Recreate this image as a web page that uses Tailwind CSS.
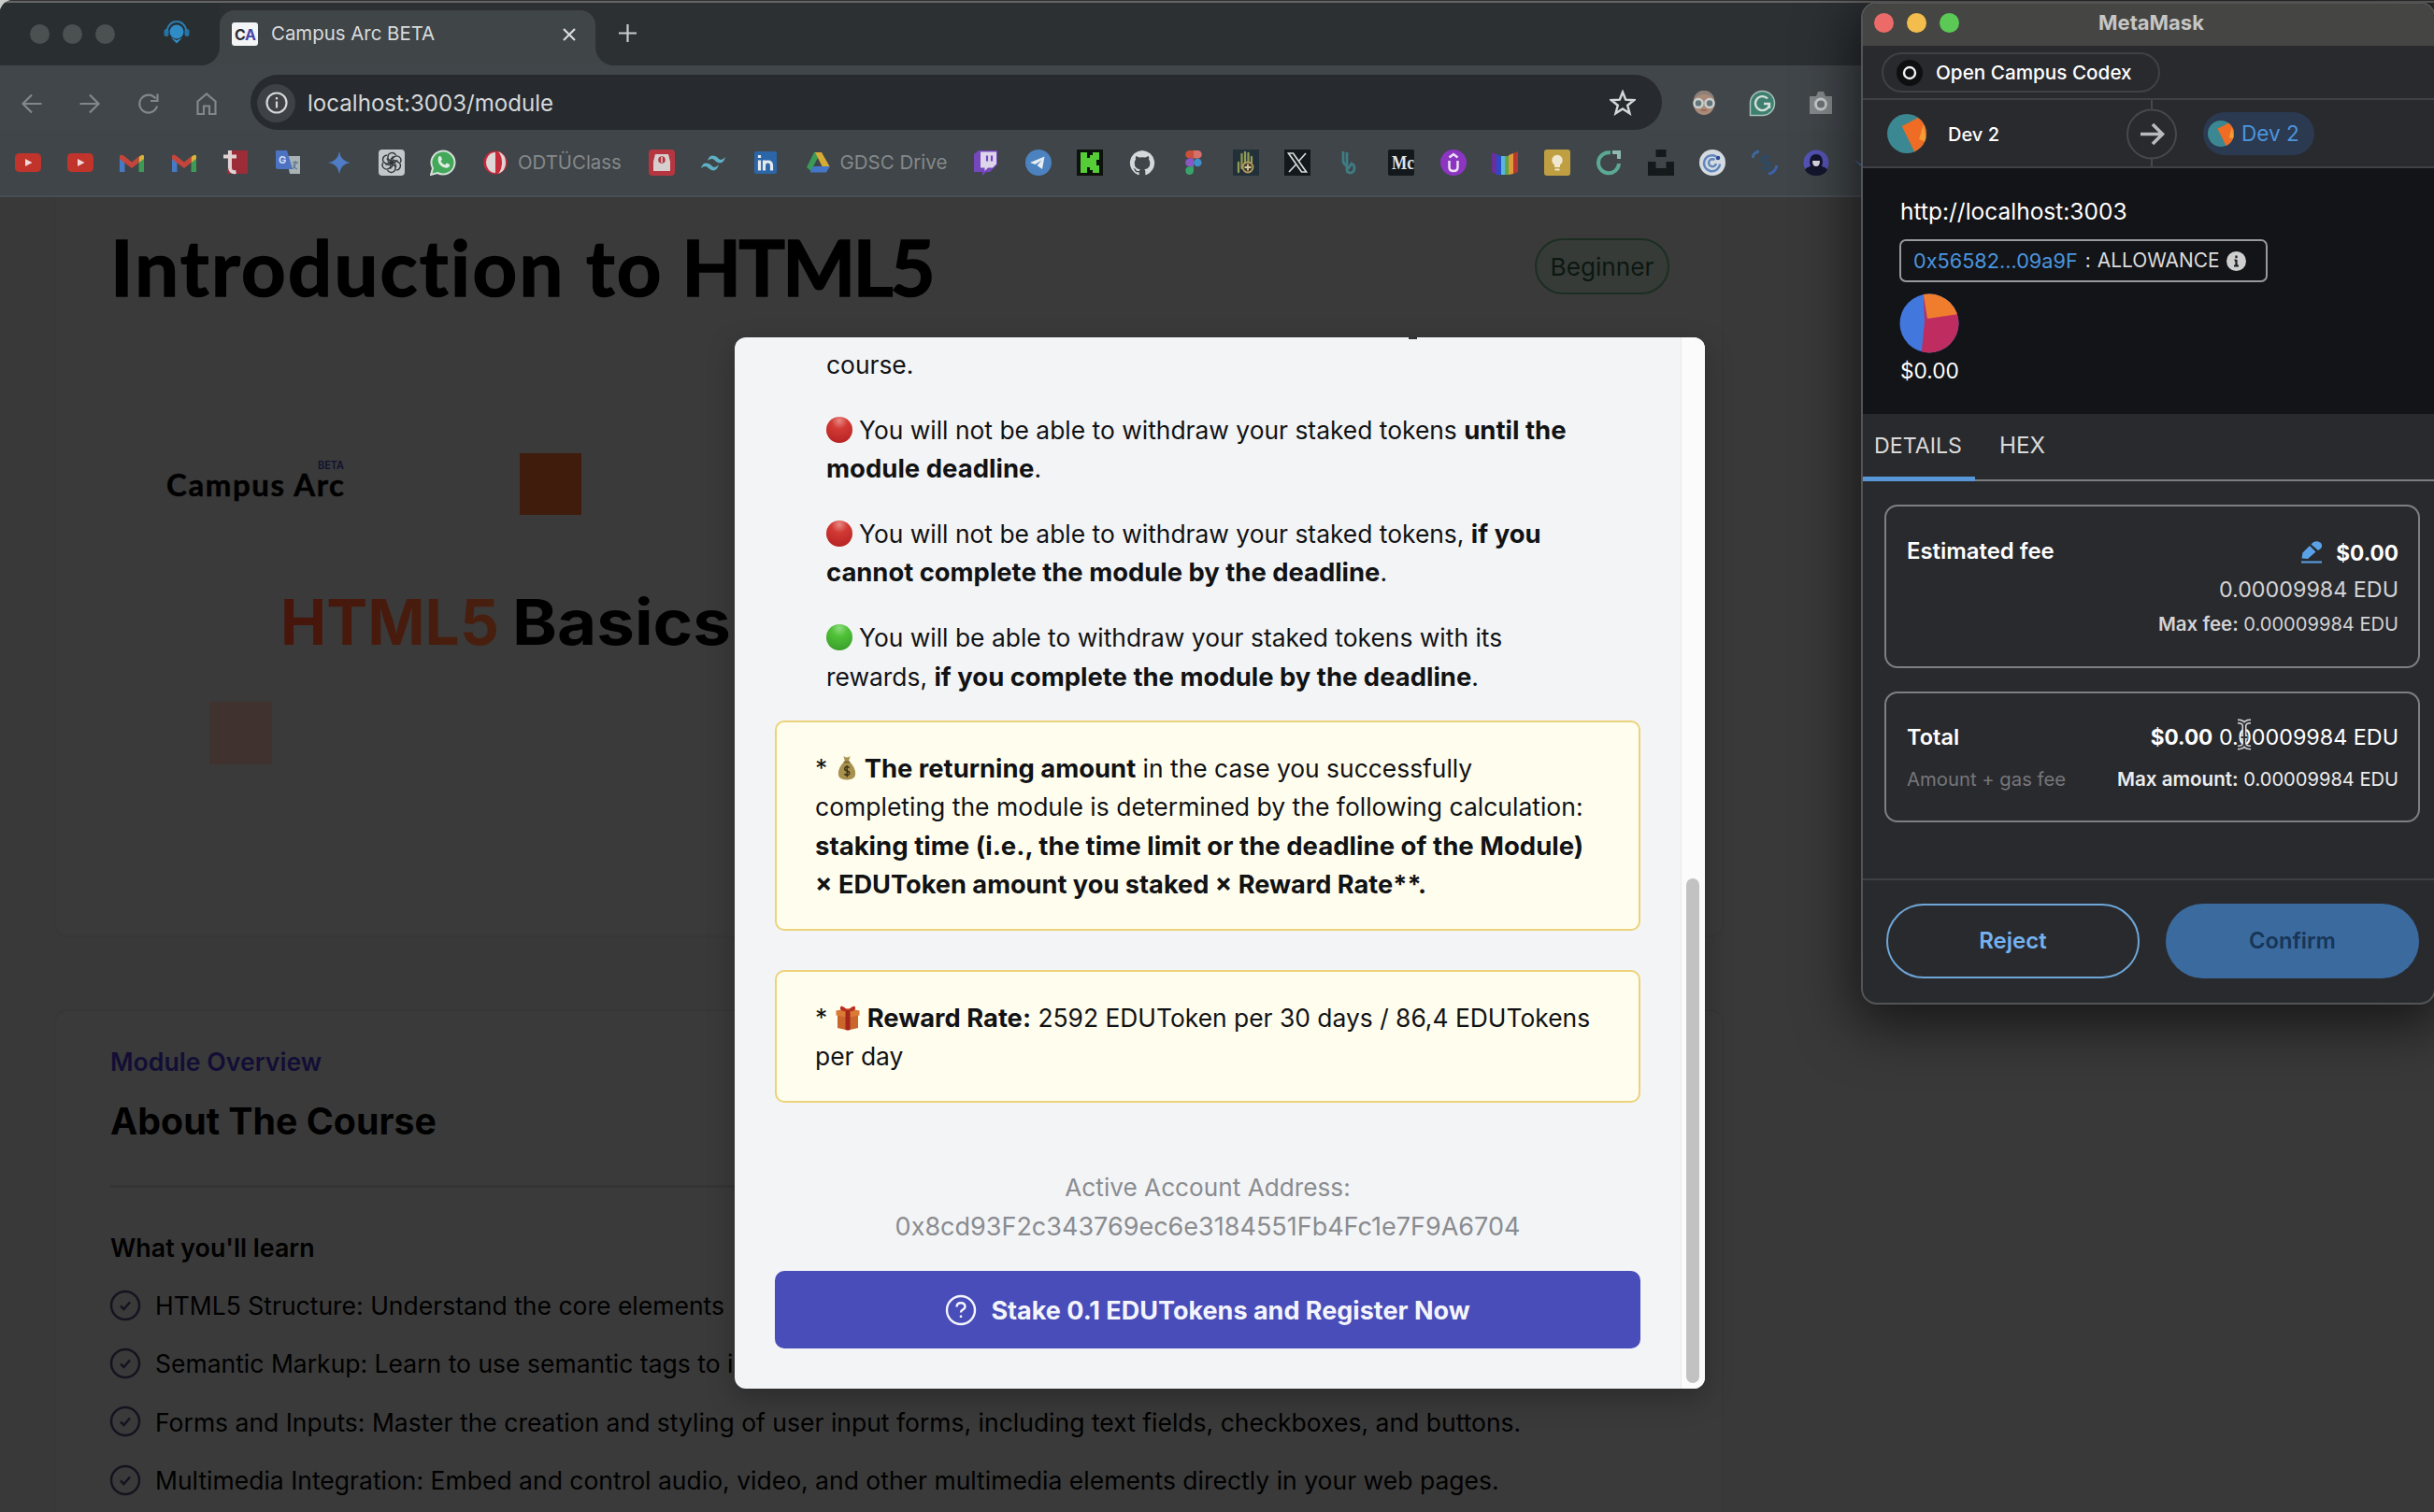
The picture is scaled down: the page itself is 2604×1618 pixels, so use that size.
<!DOCTYPE html>
<html lang="en">
<head>
<meta charset="utf-8">
<title>Campus Arc BETA</title>
<script src="https://cdn.jsdelivr.net/npm/@tailwindcss/browser@4"></script>
</head>
<body class="bg-[#333333]">
<div class="relative h-[1618px] w-[2604px] overflow-hidden bg-[#333333] font-['Inter',sans-serif] whitespace-nowrap">
  <div class="absolute left-0 top-0 size-3 bg-[#c9cbc8]"></div>

  <!-- Browser window -->
  <div class="relative flex h-full flex-col overflow-hidden rounded-tl-[14px] bg-[#3a3a3a]">
    <div class="h-[1px] shrink-0 bg-[#333333]"></div>
    <div class="h-[2px] shrink-0 bg-[#646464]"></div>

    <!-- Tab strip -->
    <div class="flex h-[67px] shrink-0 bg-[#404548]">
      <div class="flex w-[235px] items-center rounded-br-[20px] bg-[#292e30] pl-[32px]">
        <div class="mt-[-1px] flex gap-[14px]">
          <div class="size-[21px] rounded-full bg-[#4b5050]"></div>
          <div class="size-[21px] rounded-full bg-[#4b5050]"></div>
          <div class="size-[21px] rounded-full bg-[#4b5050]"></div>
        </div>
        <svg class="ml-[52px] mt-[-2px] size-[28px]" viewBox="0 0 28 28"><rect x="0.5" y="9" width="5" height="8" rx="2.5" fill="#2573a6"/><rect x="22.500" y="9" width="5" height="8" rx="2.5" fill="#2573a6"/><path d="M4 11a10 10 0 0 1 20 0" fill="none" stroke="#2b7cb0" stroke-width="2"/><circle cx="14" cy="12" r="7.500" fill="#2f8cc4"/><path d="M8 18.500l6 2.500 6-2.500-6 6z" fill="#2f8cc4"/></svg>
      </div>
      <div class="w-[402px] bg-[#2c3032]">
        <div class="mt-[8px] flex h-[59px] items-center rounded-t-[16px] bg-[#404548] pl-[13px] pb-[9px]">
          <svg class="h-[25px] w-[28px]" viewBox="0 0 28 25"><rect width="28" height="25" rx="3" fill="#f4f5f7"/><text x="3" y="18.500" font-family="Inter" font-weight="700" font-size="16" fill="#2b2b33">C</text><text x="14" y="18.500" font-family="Inter" font-weight="700" font-size="16" fill="#4a45a8">A</text></svg>
          <div class="ml-[14px] text-[20.4px] text-[#d9dbdc]">Campus Arc BETA</div>
          <svg class="ml-[136px] mt-px size-[16px]" viewBox="0 0 16 16"><path d="M2 2l12 12M14 2L2 14" stroke="#d9dbdc" stroke-width="2.200"/></svg>
        </div>
      </div>
      <div class="flex flex-1 items-center rounded-bl-[20px] bg-[#2c3033] pl-[25px] pb-[2px]">
        <svg class="size-[19px]" viewBox="0 0 19 19"><path d="M9.500 0v19M0 9.500h19" stroke="#c9cccd" stroke-width="2.200"/></svg>
      </div>
    </div>

    <!-- Toolbar -->
    <div class="flex h-[69px] shrink-0 items-end bg-[#41464a]">
      <div class="flex h-[59px] w-[268px] items-center gap-[38.400px] pl-[22px] pt-[2px] text-[#83878a]">
        <svg class="size-[24px]" viewBox="0 0 24 24" fill="none" stroke="currentColor" stroke-width="2.200"><path d="M22.500 12H3M12 2.500L2.500 12 12 21.500"/></svg>
        <svg class="size-[24px]" viewBox="0 0 24 24" fill="none" stroke="currentColor" stroke-width="2.200"><path d="M1.500 12H21M12 2.500l9.500 9.500L12 21.500"/></svg>
        <svg class="size-[24px]" viewBox="0 0 24 24" fill="none" stroke="currentColor" stroke-width="2.200"><path d="M21 14.500A9.500 9.500 0 1 1 19.500 6.500M21.500 1.500v7.500H14"/></svg>
        <svg class="size-[24px]" viewBox="0 0 24 24" fill="none" stroke="currentColor" stroke-width="2.200"><path d="M2.500 9.500L12 1.500l9.500 8V23H15v-8.500H9V23H2.500z"/></svg>
      </div>
      <div class="flex h-[59px] w-[1510px] items-center rounded-full bg-[#272b2f] pl-[7px] pr-[28px]">
        <div class="mt-px flex size-[41px] items-center justify-center rounded-full bg-[#3e4246]">
          <svg class="size-[24px]" viewBox="0 0 24 24"><circle cx="12" cy="12" r="10.500" fill="none" stroke="#d5d7d8" stroke-width="2.200"/><path d="M12 10.500V17.500M12 6v2.600" stroke="#d5d7d8" stroke-width="2.200"/></svg>
        </div>
        <div class="ml-[13px] mt-[3px] flex-1 text-[24.1px] text-[#d5d8da]">localhost:3003/module</div>
        <svg class="size-[28px]" viewBox="0 0 28 28"><path d="M14 2.500l3.200 8.200 8.800.5-6.800 5.500 2.300 8.600L14 20.500l-7.500 4.800 2.300-8.600L2 11.200l8.800-.5z" fill="none" stroke="#d5d8da" stroke-width="2.400"/></svg>
      </div>
      <div class="flex h-[59px] items-center gap-[34px] pl-[31px] pt-px">
        <svg class="size-[28px]" viewBox="0 0 28 28"><ellipse cx="14" cy="14" rx="11.500" ry="13" fill="#a98a78"/><path d="M3 10q2-9 11-9t11 9q-5-5-11-5T3 10z" fill="#8d8078"/><circle cx="8" cy="14.500" r="4.500" fill="#65757a" stroke="#c9d0cf" stroke-width="2.500"/><circle cx="20" cy="14.500" r="4.500" fill="#65757a" stroke="#c9d0cf" stroke-width="2.500"/><path d="M11 22h6" stroke="#995c50" stroke-width="1.500"/></svg>
        <svg class="size-[29px]" viewBox="0 0 29 29"><path d="M1.500 27.500V14.500a13 13 0 1 1 13 13z" fill="#3f7f6f" stroke="#a7c3b9" stroke-width="1.500"/><path d="M20 9.500a7.500 7.500 0 1 0 2 5.500h-6M22 15v5" fill="none" stroke="#d3dfda" stroke-width="2.400"/></svg>
        <svg class="size-[28px]" viewBox="0 0 28 28"><path d="M2 7h7l2-5h6l2 5h7v19H2z" fill="#85898b"/><circle cx="14" cy="15.500" r="5.500" fill="#6f7476" stroke="#c9cccd" stroke-width="2.800"/></svg>
      </div>
    </div>

    <!-- Bookmarks -->
    <div class="flex h-[70px] shrink-0 items-center gap-[27.500px] bg-[#3f4548] pl-4">
      <svg class="size-[28px] shrink-0" viewBox="0 0 28 28"><rect y="4" width="28" height="20" rx="4.500" fill="#c0342c"/><path d="M11 10l7.500 4-7.500 4z" fill="#f0d9d8"/></svg>
      <svg class="size-[28px] shrink-0" viewBox="0 0 28 28"><rect y="4" width="28" height="20" rx="4.500" fill="#c0342c"/><path d="M11 10l7.500 4-7.500 4z" fill="#f0d9d8"/></svg>
      <svg class="size-[28px] shrink-0" viewBox="0 0 28 28"><path d="M1 8v16h5.500V12z" fill="#4779c4"/><path d="M27 8v16h-5.500V12z" fill="#3f9a55"/><path d="M21.500 8v6L27 10V7q-1-3-5.500 1z" fill="#d9b13b"/><path d="M1 7q1-3 5 0l8 6.500L21.500 7.500v6.500L14 20l-8-6-5-4z" fill="#c6453b"/></svg>
      <svg class="size-[28px] shrink-0" viewBox="0 0 28 28"><path d="M1 8v16h5.500V12z" fill="#4779c4"/><path d="M27 8v16h-5.500V12z" fill="#3f9a55"/><path d="M21.500 8v6L27 10V7q-1-3-5.500 1z" fill="#d9b13b"/><path d="M1 7q1-3 5 0l8 6.500L21.500 7.500v6.500L14 20l-8-6-5-4z" fill="#c6453b"/></svg>
      <svg class="size-[28px] shrink-0" viewBox="0 0 28 28"><rect x="5" y="1" width="22" height="25" fill="#9c2c38"/><path d="M8 1v18q0 6 6.500 5M1 7.500h14" fill="none" stroke="#e0d3d4" stroke-width="4"/></svg>
      <svg class="size-[28px] shrink-0" viewBox="0 0 28 28"><path d="M12 7h15v19H16z" fill="#a9b2b5"/><path d="M19 14h6M22 12v3q0 4-4 6M20 16q1 4 4 5" stroke="#5f7d91" stroke-width="1.300" fill="none"/><path d="M1 1h12l6 20H3q-2 0-2-2z" fill="#4c72c2"/><text x="4" y="15" font-family="Inter" font-weight="700" font-size="11" fill="#d3ddf2">G</text></svg>
      <svg class="size-[28px] shrink-0" viewBox="0 0 28 28"><path d="M14 2q1.500 10.500 12 12-10.500 1.500-12 12-1.500-10.500-12-12 10.500-1.500 12-12z" fill="#4f7cc4"/></svg>
      <svg class="size-[28px] shrink-0" viewBox="0 0 28 28"><rect width="28" height="28" rx="4" fill="#c2c8ca"/><g fill="none" stroke="#30363a" stroke-width="1.400"><path id="petal" d="M10 12.500V8a4.500 4.500 0 0 1 8.500-2l0 0M10 12.500l4.500 2.600 6-3.500"/><use href="#petal" transform="rotate(60 14 14)"/><use href="#petal" transform="rotate(120 14 14)"/><use href="#petal" transform="rotate(180 14 14)"/><use href="#petal" transform="rotate(240 14 14)"/><use href="#petal" transform="rotate(300 14 14)"/></g></svg>
      <svg class="size-[28px] shrink-0" viewBox="0 0 28 28"><path d="M1 27l2-7a12.500 12.500 0 1 1 5 5z" fill="#43a95a" stroke="#d5e0d8" stroke-width="2"/><path d="M9 8q2-2 3 0l1 2.500-1.500 2q1.500 3 4.500 4l2-2 3 1.500q1 1-1 3-3 2-7.500-1Q7.500 14 9 8z" fill="#e3ebe5"/></svg>
      <div class="flex w-[151px] shrink-0 items-center gap-[10.500px] text-[20.4px] text-[#85898b]">
        <svg class="size-[28px] shrink-0" viewBox="0 0 28 28"><circle cx="14" cy="14" r="12.500" fill="#c92a3a"/><path d="M14 3a10 11 0 0 0 0 22z" fill="#ddd5d6"/><path d="M17 2q8 3 8 12t-8 12q4-5 4-12t-4-12z" fill="#ddd5d6"/></svg>
        <span>ODTÜClass</span>
      </div>
      <svg class="size-[28px] shrink-0" viewBox="0 0 28 28"><rect width="28" height="28" rx="4" fill="#b53641"/><path d="M7 5h14l2 8v10H5V13z" fill="#d7cfcd"/><circle cx="14" cy="11" r="3.800" fill="#b53641"/><path d="M14 8v6" stroke="#d7cfcd" stroke-width="1.500"/></svg>
      <svg class="size-[28px] shrink-0" viewBox="0 0 28 28"><path d="M7 12q2-7 8-5 2 .7 4 3 3 2.500 7-2-2 8-8 6-2-.8-4-3-3-2.500-7 1zM0 20q2-7 8-5 2 .7 4 3 3 2.500 7-2-2 8-8 6-2-.8-4-3-3-2.500-7 1z" fill="#5fb0c4"/></svg>
      <svg class="size-[28px] shrink-0" viewBox="0 0 28 28"><rect x="2" y="2" width="24" height="24" rx="2" fill="#2b66a8"/><path d="M7.500 11.500v11M7.500 6v3M12.500 11.500v11M12.500 17q0-4 4-4t4 4v5.500" fill="none" stroke="#e3e9ef" stroke-width="3.200"/></svg>
      <div class="flex w-[153px] shrink-0 items-center gap-[10px] text-[20.500px] text-[#85898b]">
        <svg class="size-[28px] shrink-0" viewBox="0 0 28 28"><path d="M10 3h7l-10.500 20L2 19z" fill="#3d9a56"/><path d="M11 3h7l8.500 15h-8z" fill="#d8aa36"/><path d="M9 18h18l-4 6.500H5.500z" fill="#4577c9"/></svg>
        <span>GDSC Drive</span>
      </div>
      <svg class="size-[28px] shrink-0" viewBox="0 0 28 28"><path d="M1 5l5-4h20v15l-8 8h-4l-4 4v-4H1z" fill="#7547bd"/><path d="M8 2.500h17v13l-4 4h-5l-3.500 3.500v-3.500H8z" fill="#ddd6ea"/><path d="M15 6.500v6M20 6.500v6" stroke="#7547bd" stroke-width="2.200"/></svg>
      <svg class="size-[28px] shrink-0" viewBox="0 0 28 28"><circle cx="14" cy="14" r="14" fill="#4b82bf"/><path d="M5 14L20.500 7.500 18 21l-5.500-4 5-5.500-7 4.500z" fill="#e8edf2"/></svg>
      <svg class="size-[28px] shrink-0" viewBox="0 0 28 28"><rect width="28" height="28" fill="#0d120d"/><path d="M4 3h7v6h3V6h3V3h7v8h-3v6h3v8h-7v-3h-3v-3h-3v6H4z" fill="#56cc38"/></svg>
      <svg class="size-[28px] shrink-0" viewBox="0 0 28 28"><path d="M14 1a13.500 13.500 0 0 0-4.200 26.200c.7.100.9-.3.900-.7v-2.300c-3.800.8-4.600-1.800-4.600-1.800-.6-1.600-1.500-2-1.500-2 1.800-.5 2.600 1.300 2.600 1.300 1.200 2 3 1.400 3.800 1.100.1-.9.500-1.400.8-1.800-3-.3-6-1.500-6-6.600 0-1.500.5-2.600 1.300-3.600-.1-.300-.6-1.700.1-3.500 0 0 1.100-.4 3.600 1.300a12 12 0 0 1 6.500 0c2.500-1.700 3.600-1.300 3.600-1.300.7 1.800.2 3.200.1 3.500.9 1 1.300 2.100 1.300 3.600 0 5.100-3 6.300-6 6.600.5.500 1 1.300 1 2.500v3c0 .5.200.9.900.7A13.500 13.500 0 0 0 14 1z" fill="#d4d8da"/></svg>
      <svg class="size-[28px] shrink-0" viewBox="0 0 28 28"><path d="M14 1H9.500a4.300 4.300 0 0 0 0 8.600H14z" fill="#c9503a"/><path d="M14 1h4.500a4.300 4.300 0 0 1 0 8.600H14z" fill="#d5706a"/><path d="M14 9.600H9.500a4.300 4.300 0 0 0 0 8.700H14z" fill="#8858c4"/><circle cx="18.300" cy="14" r="4.300" fill="#3f8fc9"/><path d="M14 18.300H9.500a4.300 4.300 0 1 0 4.500 4.300z" fill="#37a56a"/></svg>
      <svg class="size-[28px] shrink-0" viewBox="0 0 28 28"><rect width="28" height="28" fill="#22303a"/><path d="M6 24V14M9.500 20V5M13 16V3M16.500 13V4M20 14V8" stroke="#8f9a55" stroke-width="2.300" stroke-linecap="round"/><circle cx="16" cy="19" r="5.500" fill="#3a3b30" stroke="#b79c5c" stroke-width="1.800"/><path d="M16 15.500v7M12.500 19h7" stroke="#d8ca9b" stroke-width="1.800"/></svg>
      <svg class="size-[28px] shrink-0" viewBox="0 0 28 28"><rect width="28" height="28" fill="#12181b"/><path d="M4.500 4h5l14 20h-5zM23 4l-8 9M12.500 16L5 24" fill="none" stroke="#d7dadb" stroke-width="1.700"/></svg>
      <svg class="size-[28px] shrink-0" viewBox="0 0 28 28"><path d="M7 2v10q0 3 3 5M11 3v19q0 3 4 3 4-1 4-5t-3-5l-4 6" fill="none" stroke="#3f7c83" stroke-width="2.800"/></svg>
      <svg class="size-[28px] shrink-0" viewBox="0 0 28 28"><rect width="28" height="28" rx="2" fill="#12181b"/><text x="4" y="20.500" font-family="Liberation Serif" font-weight="700" font-size="20" textLength="24" lengthAdjust="spacingAndGlyphs" fill="#e2e4e5">Mc</text></svg>
      <svg class="size-[28px] shrink-0" viewBox="0 0 28 28"><circle cx="14" cy="14" r="14" fill="#8b35c0"/><path d="M9.500 12v7q0 4 4.500 4t4.500-4v-7M9.500 8.500L14 5l4.500 3.500" fill="none" stroke="#ecdff4" stroke-width="2.500"/></svg>
      <svg class="size-[28px] shrink-0" viewBox="0 0 28 28"><path d="M0 3l5 2v22l-5-3z" fill="#6b2e9b"/><path d="M5 5l5 2v20H5z" fill="#2b49c8"/><path d="M10 7h4v20h-4z" fill="#5ab6d8"/><path d="M14 7h4v20h-4z" fill="#62a545"/><path d="M18 6l5-2v22l-5 1z" fill="#dd9b3b"/><path d="M23 4l5-2v22l-5 2z" fill="#b9372e"/></svg>
      <svg class="size-[28px] shrink-0" viewBox="0 0 28 28"><rect width="28" height="28" rx="3" fill="#c09f42"/><circle cx="14" cy="11.500" r="5.700" fill="#efe7cf"/><rect x="11" y="16" width="6" height="3" fill="#efe7cf"/><rect x="11.500" y="20.500" width="5" height="2" fill="#efe7cf"/></svg>
      <svg class="size-[28px] shrink-0" viewBox="0 0 28 28"><path d="M16 3.500A11 11 0 1 0 25 15" fill="none" stroke="#5ba895" stroke-width="4"/><path d="M18 1h9v9h-4V5h-5z" fill="#8fb8ae"/></svg>
      <svg class="size-[28px] shrink-0" viewBox="0 0 28 28"><path d="M8.500 0h11v8h-11zM0 13h8.500v7h11v-7H28v15H0z" fill="#14191c"/></svg>
      <svg class="size-[28px] shrink-0" viewBox="0 0 28 28"><circle cx="14" cy="14" r="14" fill="#d5dae0"/><path d="M18 7.500a8.500 8.500 0 1 0 4 8M16.500 11a4 4 0 1 0 1.500 4" fill="none" stroke="#5f86bd" stroke-width="2.400"/><circle cx="20" cy="9" r="2.300" fill="#2b4a9b"/></svg>
      <svg class="size-[28px] shrink-0" viewBox="0 0 28 28" fill="none" stroke-width="3"><path d="M1 9q1-6 7-7" stroke="#3d6a9b"/><path d="M18 26q7-1 9-9" stroke="#3c61a8"/><path d="M19 9q-7-3-8 1t5 4 3 6q-3 2-8-1" stroke="#2d4b66"/></svg>
      <svg class="size-[28px] shrink-0" viewBox="0 0 28 28"><circle cx="14" cy="14" r="13.500" fill="#5553b5"/><path d="M7 14q0-9 7-9t7 9l-1 4q5 1 6 4-4 6-12 6T2 22q1-3 6-4z" fill="#14162e"/><path d="M10 12h8q0 6-4 6t-4-6z" fill="#ded9e6"/></svg>
      <svg class="-ml-[1px] h-[28px] w-[12px] shrink-0" viewBox="0 0 12 28"><path d="M0 11l9 6v3z" fill="#4c78b5"/></svg>
    </div>
    <div class="h-[2px] shrink-0 bg-[#494e54]"></div>

    <!-- Page under the dialog backdrop -->
    <div class="flex flex-1 flex-col bg-[#393939] pl-[58px]">
      <section class="flex h-[792px] w-[1786px] shrink-0 flex-col rounded-b-[14px] border-x-2 border-b-2 border-[#373737] bg-[#3a3a3a] pl-[58px] pr-[56px] pt-[31.500px] text-black">
        <div class="flex h-[84px] items-center justify-between">
          <h1 class="font-['Lato',sans-serif] text-[83px] leading-[84px] font-bold tracking-[2.300px] [font-variant-ligatures:none] [-webkit-text-stroke:1.500px_black]">Introduction to <span class="-ml-[3px] tracking-[-3px]">HTML5</span></h1>
          <div class="flex h-[60px] w-[144px] items-center justify-center rounded-full border-2 border-[#1c2e22] bg-[#363b38] pt-[2px] text-[26.2px] text-[#0c1711]">Beginner</div>
        </div>
        <svg class="mt-[73px] h-[550px] w-[1668px]" viewBox="118 400 1668 550">
          <text x="178" y="531" font-family="Lato" font-weight="700" font-size="33" textLength="190" stroke="#000" stroke-width="0.500">Campus Arc</text>
          <text x="340" y="502" font-family="Inter" font-weight="600" font-size="12" textLength="28" lengthAdjust="spacingAndGlyphs" fill="#101030">BETA</text>
          <rect x="556" y="485" width="66" height="66" fill="#401c0c"/>
          <rect x="224" y="751" width="67" height="67" fill="#40322e"/>
          <defs><linearGradient id="heat" x1="0" x2="1"><stop offset="0" stop-color="#47150b"/><stop offset="1" stop-color="#48200f"/></linearGradient></defs>
          <text x="300" y="690" font-family="Inter" font-weight="700" font-size="67" textLength="234" lengthAdjust="spacingAndGlyphs" fill="url(#heat)">HTML5</text>
          <text x="548" y="690" font-family="Inter" font-weight="700" font-size="67" textLength="234" lengthAdjust="spacingAndGlyphs">Basics</text>
        </svg>
      </section>

      <section class="mt-[77px] h-[600px] w-[1786px] shrink-0 rounded-t-[14px] border-x-2 border-t-2 border-[#373737] bg-[#3a3a3a] pl-[58px] pr-[56px] pt-[34px] text-[26.500px] text-black">
        <div class="text-[26.700px] leading-[40px] font-semibold text-[#120e35]">Module Overview</div>
        <h2 class="mt-[20px] text-[39.300px] leading-[48px] font-bold">About The Course</h2>
        <div class="mt-[44px] h-[3px] bg-[#343434]"></div>
        <div class="mt-[43.500px] text-[26.800px] leading-[40px] font-semibold">What you'll learn</div>
        <ul class="mt-[22.500px] flex flex-col gap-[20.700px] leading-[41.600px]">
          <li class="flex items-center gap-[16px]"><svg class="-ml-px mt-[-2px] size-[34px] text-[#15131f]" viewBox="0 0 34 34" fill="none" stroke="currentColor" stroke-width="2.500"><circle cx="17" cy="17" r="15"/><path d="M12 17.500l3.500 3.500 6.500-7.500"/></svg><span class="-ml-px">HTML5 Structure: Understand the core elements</span></li>
          <li class="flex items-center gap-[16px]"><svg class="-ml-px mt-[-2px] size-[34px] text-[#15131f]" viewBox="0 0 34 34" fill="none" stroke="currentColor" stroke-width="2.500"><circle cx="17" cy="17" r="15"/><path d="M12 17.500l3.500 3.500 6.500-7.500"/></svg><span class="-ml-px">Semantic Markup: Learn to use semantic tags to i</span></li>
          <li class="flex items-center gap-[16px]"><svg class="-ml-px mt-[-2px] size-[34px] text-[#15131f]" viewBox="0 0 34 34" fill="none" stroke="currentColor" stroke-width="2.500"><circle cx="17" cy="17" r="15"/><path d="M12 17.500l3.500 3.500 6.500-7.500"/></svg><span class="-ml-px">Forms and Inputs: Master the creation and styling of user input forms, including text fields, checkboxes, and buttons.</span></li>
          <li class="flex items-center gap-[16px]"><svg class="-ml-px mt-[-2px] size-[34px] text-[#15131f]" viewBox="0 0 34 34" fill="none" stroke="currentColor" stroke-width="2.500"><circle cx="17" cy="17" r="15"/><path d="M12 17.500l3.500 3.500 6.500-7.500"/></svg><span class="-ml-px">Multimedia Integration: Embed and control audio, video, and other multimedia elements directly in your web pages.</span></li>
        </ul>
      </section>
    </div>
  </div>

  <!-- Staking dialog -->
  <div class="absolute left-[786px] top-[361px] flex h-[1125px] w-[1038px] overflow-hidden rounded-[12px] bg-[#f3f4f6] shadow-[0_10px_30px_rgba(0,0,0,0.25)]">
    <div class="flex w-[1012px] flex-col pl-[43px] pr-[43px] text-[26.400px] leading-[41.600px] text-[#111214]">
      <div class="ml-[678px] h-[2px] w-[9px] shrink-0 bg-[#333]"></div>
      <div class="mt-[7px] flex flex-col gap-[28px] pl-[55px]">
        <p>course.</p>
        <p><svg class="mr-[7px] inline size-[28px] align-[-4px]" viewBox="0 0 28 28"><defs><radialGradient id="red" cx="0.5" cy="0.15" r="0.9"><stop offset="0" stop-color="#e88a84"/><stop offset="0.35" stop-color="#d23a35"/><stop offset="1" stop-color="#b52222"/></radialGradient></defs><circle cx="14" cy="14" r="14" fill="url(#red)"/></svg>You will not be able to withdraw your staked tokens <b class="text-[27.500px] leading-none">until the</b><br><b class="text-[27.500px] leading-none">module deadline</b>.</p>
        <p><svg class="mr-[7px] inline size-[28px] align-[-4px]" viewBox="0 0 28 28"><circle cx="14" cy="14" r="14" fill="url(#red)"/></svg>You will not be able to withdraw your staked tokens, <b class="text-[27.400px] leading-none">if you</b><br><b class="text-[27.400px] leading-none">cannot complete the module by the deadline</b>.</p>
        <p><svg class="mr-[7px] inline size-[28px] align-[-4px]" viewBox="0 0 28 28"><defs><radialGradient id="green" cx="0.5" cy="0.15" r="0.9"><stop offset="0" stop-color="#8fdc80"/><stop offset="0.35" stop-color="#50c238"/><stop offset="1" stop-color="#3a9c2a"/></radialGradient></defs><circle cx="14" cy="14" r="14" fill="url(#green)"/></svg>You will be able to withdraw your staked tokens with its<br>rewards, <b class="text-[27.450px] leading-none">if you complete the module by the deadline</b>.</p>
      </div>
      <div class="mt-[26px] h-[225px] shrink-0 rounded-[10px] border-2 border-[#ecd27a] bg-[#fffdee] pl-[41px] pt-[28.500px]">
        * <svg class="mr-[8px] ml-[2px] inline h-[27px] w-[22px] align-[-3px]" viewBox="0 0 24 27" preserveAspectRatio="none"><path d="M8 1q4 3 8 0l-2 6h-4z" fill="#a8914f"/><path d="M9 7h6q7 6 7 13 0 6-10 6.500Q2 26 2 20 2 13 9 7z" fill="#a8914f"/><path d="M8.500 7.500h7" stroke="#75602b" stroke-width="1.800"/><path d="M15 13.500q-5-2.500-5.500 1 0 2 2.700 2.500 3 .6 2.800 2.600-.8 3-6 1M12.200 11v12.500" fill="none" stroke="#3e3518" stroke-width="1.600"/></svg><b class="text-[27.400px] leading-none">The returning amount</b> in the case you successfully<br><span class="text-[26.500px] leading-none">completing the module is determined by the following calculation:</span><br><b class="text-[27.550px] leading-none">staking time (i.e., the time limit or the deadline of the Module)</b><br><b class="text-[27.200px] leading-none">× EDUToken amount you staked × Reward Rate**.</b>
      </div>
      <div class="mt-[42px] h-[142px] shrink-0 rounded-[10px] border-2 border-[#ecd27a] bg-[#fffdee] pl-[41px] pt-[28.500px]">
        * <svg class="mr-[7px] inline h-[28px] w-[28px] align-[-4px]" viewBox="0 0 28 28"><path d="M3 8l11-3 11 3v17l-11 2.500L3 25z" fill="#c8662b"/><path d="M1.500 6.500L14 4l12.500 2.500v5L14 14 1.500 11.500z" fill="#d97b35"/><path d="M11.500 6h5v21l-2.500.5-2.500-.5z" fill="#a3251c"/><path d="M14 6Q5-2 6 5q3 4 8 1 5 3 8-1 1-7-8 1z" fill="#b93022"/></svg><b class="text-[27.300px] leading-none">Reward Rate:</b> 2592 EDUToken per 30 days / 86,4 EDUTokens<br>per day
      </div>
      <div class="mt-[70px] text-center text-[#8a8c90]">
        <div class="text-[26.200px]">Active Account Address:</div>
        <div class="text-[27px]">0x8cd93F2c343769ec6e3184551Fb4Fc1e7F9A6704</div>
      </div>
      <div class="mt-[27px] flex h-[83px] shrink-0 items-center justify-center gap-[15px] rounded-[10px] bg-[#484db9] text-[27px] font-bold text-[#f4f5fc]">
        <svg class="size-[34px]" viewBox="0 0 34 34" fill="none" stroke="#f4f5fc" stroke-width="2.400"><circle cx="17" cy="17" r="15"/><path d="M12.500 13.500q.3-4.200 4.500-4.200t4.500 3.700q0 2.300-2.700 3.600-1.800 1-1.800 3M17 22.500v2.600"/></svg>
        <span class="pt-px">Stake 0.1 EDUTokens and Register Now</span>
      </div>
    </div>
    <!-- Scrollbar -->
    <div class="w-[26px] border-l border-[#e9e9e9] bg-[#fbfbfb] pl-[5px] pt-[579px]">
      <div class="h-[540px] w-[14px] rounded-full bg-[#c2c2c2]"></div>
    </div>
  </div>

  <!-- MetaMask window -->
  <div class="absolute left-[1991px] top-[2px] flex h-[1073px] w-[615px] flex-col overflow-hidden rounded-[17px] border-2 border-[#535456] bg-[#292a2e] text-white shadow-[0_14px_60px_8px_rgba(0,0,0,0.6)]">
    <div class="relative flex h-[45px] shrink-0 items-center justify-center bg-[#454543]">
      <div class="absolute left-[12px] top-[10px] flex gap-[14px]">
        <div class="size-[21px] rounded-full bg-[#ec6b68]"></div>
        <div class="size-[21px] rounded-full bg-[#f3bd4e]"></div>
        <div class="size-[21px] rounded-full bg-[#5bc955]"></div>
      </div>
      <div class="-mt-[4px] mr-[-6px] text-[22px] font-bold text-[#c6c6c4]">MetaMask</div>
    </div>
    <div class="flex h-[58px] shrink-0 items-center border-b-2 border-[#404146] pl-[20px] pt-px">
      <div class="flex h-[43px] w-[298px] items-center rounded-full border-2 border-[#404146] pl-[14px]">
        <svg class="size-[28px]" viewBox="0 0 28 28"><circle cx="14" cy="14" r="14" fill="#0e0f11"/><circle cx="14" cy="14" r="6" fill="none" stroke="#f2f2f2" stroke-width="2.400"/></svg>
        <div class="ml-[14px] pt-px text-[20.700px] font-medium">Open Campus Codex</div>
      </div>
    </div>
    <div class="flex h-[73px] shrink-0 items-center border-b-2 border-[#404146] pl-[26px]">
      <svg class="size-[42px]" viewBox="0 0 42 42"><defs><clipPath id="round"><circle cx="21" cy="21" r="21"/></clipPath></defs><g clip-path="url(#round)"><rect width="42" height="42" fill="#3b8792"/><path d="M15.700 13L33 4l9 4v34H30z" fill="#ee6c24"/><path d="M39 11l-5 16 8 3z" fill="#f39d33"/></g></svg>
      <div class="ml-[23px] w-[191px] pt-[2px] text-[20px] font-medium">Dev 2</div>
      <svg class="h-[71px] w-[54px]" viewBox="0 0 54 71"><path d="M27 0v9M27 63v8" stroke="#47484d" stroke-width="2"/><circle cx="27" cy="36.500" r="26" fill="none" stroke="#47484d" stroke-width="2"/><path d="M15 36.500h22M28 26l10.500 10.500L28 47" fill="none" stroke="#b9babc" stroke-width="3.600"/></svg>
      <div class="ml-[28px] flex h-[46px] w-[119px] items-center rounded-full bg-[#2b3a50] pl-[5px]">
        <svg class="size-[28px]" viewBox="0 0 42 42"><g clip-path="url(#round)"><rect width="42" height="42" fill="#3b8792"/><path d="M15.700 13L33 4l9 4v34H30z" fill="#ee6c24"/><path d="M39 11l-5 16 8 3z" fill="#f39d33"/></g></svg>
        <div class="ml-[8px] pt-px text-[22.600px] text-[#4b95df]">Dev 2</div>
      </div>
    </div>
    <div class="flex h-[263px] shrink-0 flex-col items-start bg-[#131418] pl-[40px] pt-[28px]">
      <div class="text-[24.500px] leading-[36px]">http://localhost:3003</div>
      <div class="mt-[12px] -ml-px flex h-[46px] w-[394px] items-center rounded-[7px] border-2 border-[#98999a] pl-[13px]">
        <div class="text-[21.700px] text-[#4b95df]">0x56582...09a9F</div>
        <div class="ml-[8px] text-[20.900px] text-[#dcdcdd]">:</div>
        <div class="ml-[7px] text-[20.900px] text-[#dcdcdd]">ALLOWANCE</div>
        <svg class="ml-[7px] size-[21px]" viewBox="0 0 21 21"><circle cx="10.500" cy="10.500" r="10.500" fill="#cfcfd0"/><path d="M10.500 9v7M10.500 4.500V7.300M8 15.500h5M8.500 9.500h2" stroke="#1a1b1f" stroke-width="2.200"/></svg>
      </div>
      <svg class="mt-[12px] -ml-px size-[64px]" viewBox="0 0 64 64"><defs><clipPath id="disc"><circle cx="32" cy="32" r="31.500"/></clipPath></defs><g clip-path="url(#disc)"><rect width="64" height="64" fill="#4277dd"/><path d="M25.700 0L27 30l-3.300 34H64V20L30 27z" fill="#bf2c60"/><path d="M25.700 0H64v22L30 27z" fill="#ef7d2d"/></g></svg>
      <div class="mt-[4px] text-[22.700px] leading-[30px]">$0.00</div>
    </div>
    <div class="flex h-[72px] shrink-0 border-b-2 border-[#7c7d7f] text-[#dadadb]">
      <div class="-mb-[2px] h-[72px] w-[120px] border-b-[5px] border-[#5898d8] pr-[2px] text-center text-[23.200px] leading-[68px]">DETAILS</div>
      <div class="ml-[26px] text-[24.200px] leading-[68px]">HEX</div>
    </div>
    <div class="flex h-[425px] shrink-0 flex-col pl-[23px] pt-[25px]">
      <div class="flex h-[175px] w-[573px] justify-between rounded-[14px] border-2 border-[#7e7f82] pl-[22px] pr-[21px] pt-[30px]">
        <div class="-mt-[1px] text-[23.900px] leading-[38px] font-semibold">Estimated fee</div>
        <div class="flex flex-col items-end">
          <div class="flex h-[40px] items-center gap-[14px]">
            <svg class="mt-[-2px] size-[24px]" viewBox="0 0 24 24"><path d="M1 21.500h22v2H1z" fill="#5aa2e8"/><path d="M1.500 18.500l1-6 7.500-7.500 6.500 6.500-8.500 7.500z" fill="#5aa2e8"/><path d="M11.500 3.500q3-4 7.500-3t4 5.500q-.5 2.500-4 4z" fill="#5aa2e8"/></svg>
            <span class="text-[22.600px] font-bold">$0.00</span>
          </div>
          <div class="text-[23.300px] leading-[38px] text-[#d3d3d5]">0.00009984 EDU</div>
          <div class="text-[20.100px] leading-[35px] text-[#d3d3d5]"><span class="text-[20.500px] font-semibold">Max fee:</span> 0.00009984 EDU</div>
        </div>
      </div>
      <div class="mt-[25px] flex h-[140px] w-[573px] flex-col gap-[8px] rounded-[14px] border-2 border-[#7e7f82] pl-[22px] pr-[21px] pt-[27px]">
        <div class="flex h-[40px] items-center justify-between text-[23.300px]"><span class="text-[23.500px] font-semibold">Total</span><span><b class="text-[22.600px]">$0.00</b> 0.00009984 EDU</span></div>
        <div class="flex h-[34px] items-center justify-between text-[20.100px]"><span class="text-[20.300px] text-[#75767a]">Amount + gas fee</span><span class="text-[#ececed]"><span class="text-[20.600px] font-semibold">Max amount:</span> 0.00009984 EDU</span></div>
      </div>
    </div>
    <div class="flex flex-1 gap-[28px] border-t-2 border-[#3f4044] pl-[25px] pt-[25px] text-[24px] font-semibold">
      <div class="flex h-[80px] w-[271px] items-center justify-center rounded-full border-2 border-[#6ea6d8] text-[#74b2f0]">Reject</div>
      <div class="flex h-[80px] w-[271px] items-center justify-center rounded-full bg-[#3b6a9f] text-[23.700px] text-[#173556]">Confirm</div>
    </div>
  </div>

  <!-- Text cursor -->
  <svg class="absolute left-[2391px] top-[769px] h-[34px] w-[20px]" viewBox="0 0 20 34" fill="none"><path d="M3 3q6 0 7 4 1-4 7-4M3 31q6 0 7-4 1 4 7 4M10 7v20M6.500 20h7" stroke="#d8d8d8" stroke-width="5"/><path d="M3 3q6 0 7 4 1-4 7-4M3 31q6 0 7-4 1 4 7 4M10 7v20M6.500 20h7" stroke="#303135" stroke-width="2"/></svg>
</div>
</body>
</html>
